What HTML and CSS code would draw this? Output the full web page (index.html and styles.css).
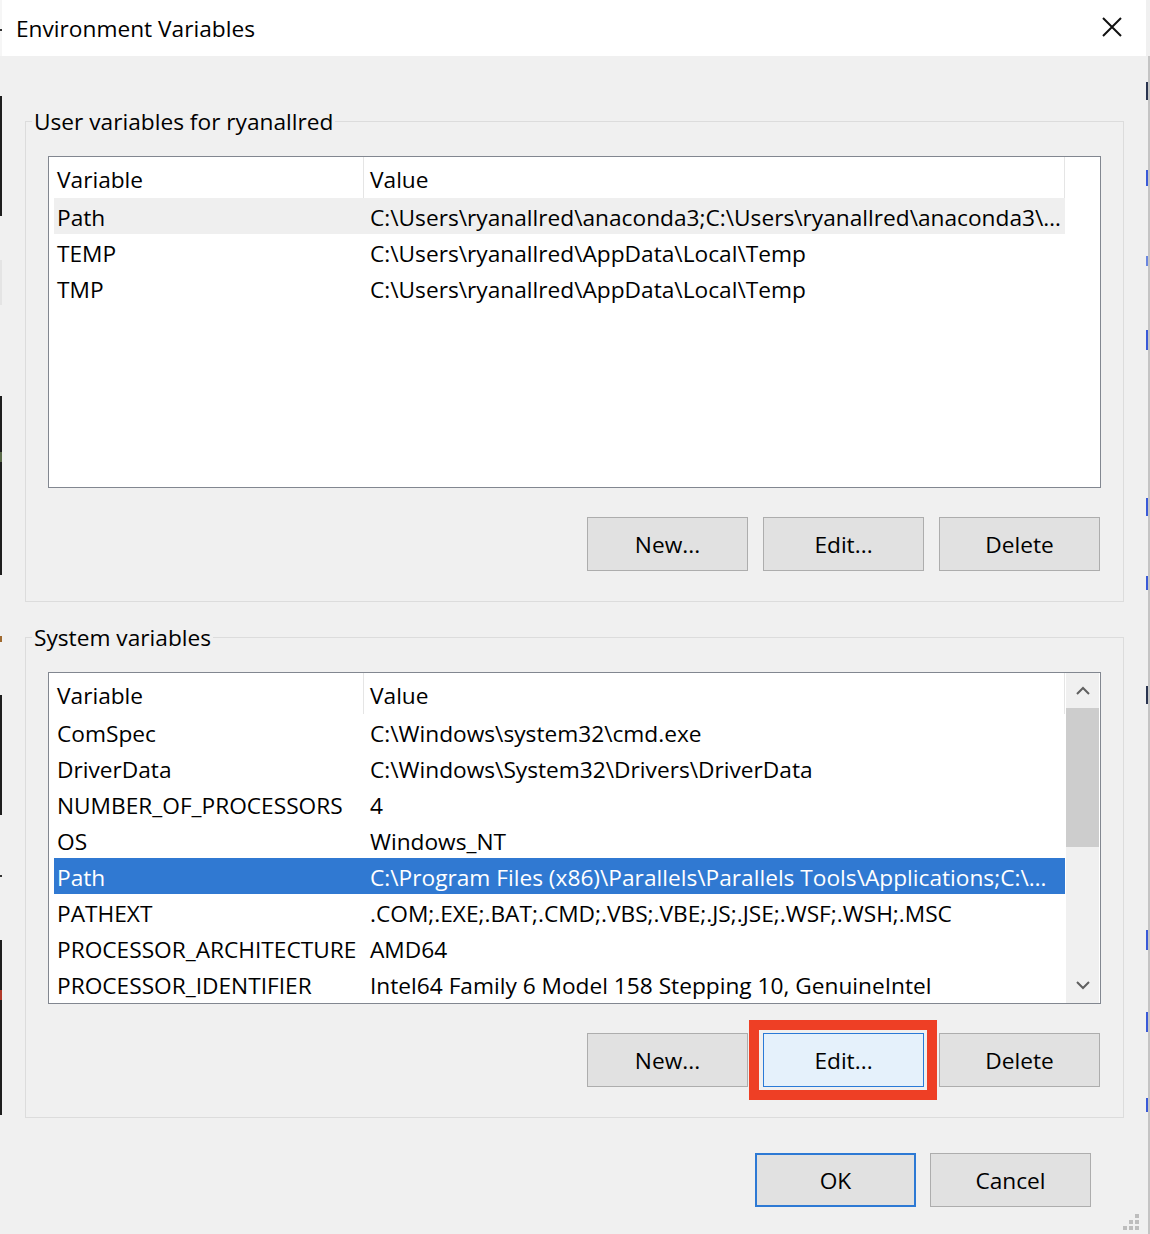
FILE: index.html
```html
<!DOCTYPE html>
<html lang="en">
<head>
<meta charset="utf-8">
<title>Environment Variables</title>
<link rel="stylesheet" href="styles.css">
</head>
<body>
<div class="screen">
  <div class="edge-left"></div>
  <div class="dialog">
    <header class="titlebar">
      <span class="title">Environment Variables</span>
      <button class="close" aria-label="Close">
        <svg width="20" height="20" viewBox="0 0 20 20"><path d="M1 1L19 19M19 1L1 19" stroke="#111" stroke-width="2" fill="none"/></svg>
      </button>
    </header>
    <main class="content">
      <fieldset class="group group-user">
        <legend>User variables for ryanallred</legend>
        <div class="group-body">
          <div class="listview">
            <div class="lv-main">
              <div class="lv-header"><div class="hcell c1">Variable</div><div class="hcell c2">Value</div></div>
              <div class="lv-row hot"><div class="cell c1">Path</div><div class="cell c2">C:\Users\ryanallred\anaconda3;C:\Users\ryanallred\anaconda3\…</div></div>
              <div class="lv-row"><div class="cell c1">TEMP</div><div class="cell c2">C:\Users\ryanallred\AppData\Local\Temp</div></div>
              <div class="lv-row"><div class="cell c1">TMP</div><div class="cell c2">C:\Users\ryanallred\AppData\Local\Temp</div></div>
            </div>
          </div>
          <div class="btn-row">
            <button class="btn">New...</button>
            <button class="btn">Edit...</button>
            <button class="btn">Delete</button>
          </div>
        </div>
      </fieldset>

      <fieldset class="group group-sys">
        <legend>System variables</legend>
        <div class="group-body">
          <div class="listview">
            <div class="lv-main">
              <div class="lv-header"><div class="hcell c1">Variable</div><div class="hcell c2">Value</div></div>
              <div class="lv-row"><div class="cell c1">ComSpec</div><div class="cell c2">C:\Windows\system32\cmd.exe</div></div>
              <div class="lv-row"><div class="cell c1">DriverData</div><div class="cell c2">C:\Windows\System32\Drivers\DriverData</div></div>
              <div class="lv-row"><div class="cell c1">NUMBER_OF_PROCESSORS</div><div class="cell c2">4</div></div>
              <div class="lv-row"><div class="cell c1">OS</div><div class="cell c2">Windows_NT</div></div>
              <div class="lv-row selected"><div class="cell c1">Path</div><div class="cell c2">C:\Program Files (x86)\Parallels\Parallels Tools\Applications;C:\…</div></div>
              <div class="lv-row"><div class="cell c1">PATHEXT</div><div class="cell c2">.COM;.EXE;.BAT;.CMD;.VBS;.VBE;.JS;.JSE;.WSF;.WSH;.MSC</div></div>
              <div class="lv-row"><div class="cell c1">PROCESSOR_ARCHITECTURE</div><div class="cell c2">AMD64</div></div>
              <div class="lv-row"><div class="cell c1">PROCESSOR_IDENTIFIER</div><div class="cell c2">Intel64 Family 6 Model 158 Stepping 10, GenuineIntel</div></div>
            </div>
            <div class="scrollbar">
              <div class="sb-btn"><svg width="14" height="9" viewBox="0 0 14 9"><path d="M1 8L7 2L13 8" stroke="#606060" stroke-width="2" fill="none"/></svg></div>
              <div class="sb-thumb"></div>
              <div class="sb-track"></div>
              <div class="sb-btn"><svg width="14" height="9" viewBox="0 0 14 9"><path d="M1 1L7 7L13 1" stroke="#606060" stroke-width="2" fill="none"/></svg></div>
            </div>
          </div>
          <div class="btn-row">
            <button class="btn">New...</button>
            <span class="annotated">
              <button class="btn btn-focus">Edit...</button>
              <span class="callout"></span>
            </span>
            <button class="btn">Delete</button>
          </div>
        </div>
      </fieldset>

      <div class="dialog-buttons">
        <button class="btn btn-default">OK</button>
        <button class="btn">Cancel</button>
      </div>
    </main>
    <svg class="grip" width="18" height="18" viewBox="0 0 18 18">
      <rect x="12" y="0" width="4" height="4" fill="#bdbdbd"/>
      <rect x="6" y="6" width="4" height="4" fill="#bdbdbd"/>
      <rect x="12" y="6" width="4" height="4" fill="#bdbdbd"/>
      <rect x="0" y="12" width="4" height="4" fill="#bdbdbd"/>
      <rect x="6" y="12" width="4" height="4" fill="#bdbdbd"/>
      <rect x="12" y="12" width="4" height="4" fill="#bdbdbd"/>
    </svg>
  </div>
  <div class="edge-right"><div class="edge-right-marks"></div><div class="edge-right-line"></div></div>
</div>
</body>
</html>
```

FILE: styles.css
```css
* { box-sizing: border-box; }

html, body {
  margin: 0;
  padding: 0;
}

body {
  width: 1150px;
  height: 1234px;
  overflow: hidden;
  background: #f0f0f0;
  font-family: "Open Sans", "Noto Sans", "DejaVu Sans", sans-serif;
  font-size: 22.7px;
  color: #000;
}

.screen {
  display: flex;
  height: 1234px;
}

/* slivers of the desktop behind the dialog */
.edge-left {
  width: 2px;
  flex: none;
  background: linear-gradient(to bottom,
    #f6f6f6 0, #f6f6f6 29px, #333 29px, #333 31px, #f6f6f6 31px, #f6f6f6 56px,
    #f0f0f0 56px, #f0f0f0 96px,
    #1e1e1e 96px, #1e1e1e 216px,
    #f0f0f0 216px, #f0f0f0 260px,
    #e4e4e4 260px, #e4e4e4 305px,
    #f0f0f0 305px, #f0f0f0 396px,
    #1e1e1e 396px, #1e1e1e 452px,
    #5a6a4a 452px, #5a6a4a 462px,
    #1e1e1e 462px, #1e1e1e 575px,
    #f0f0f0 575px, #f0f0f0 636px,
    #a06a30 636px, #a06a30 642px,
    #f0f0f0 642px, #f0f0f0 695px,
    #1e1e1e 695px, #1e1e1e 815px,
    #f0f0f0 815px, #f0f0f0 875px,
    #333 875px, #333 877px,
    #f0f0f0 877px, #f0f0f0 940px,
    #1e1e1e 940px, #1e1e1e 990px,
    #b03a2a 990px, #b03a2a 1000px,
    #1e1e1e 1000px, #1e1e1e 1115px,
    #f0f0f0 1115px);
}

.edge-right {
  width: 4px;
  flex: none;
  display: flex;
  background: #f0f0f0;
}

.edge-right-marks {
  width: 2px;
  background: linear-gradient(to bottom,
    #f0f0f0 0, #f0f0f0 82px,
    #2a3550 82px, #2a3550 100px,
    #f0f0f0 100px, #f0f0f0 170px,
    #3a5ad8 170px, #3a5ad8 186px,
    #f0f0f0 186px, #f0f0f0 256px,
    #6a86e0 256px, #6a86e0 266px,
    #f0f0f0 266px, #f0f0f0 330px,
    #3a5ad8 330px, #3a5ad8 350px,
    #f0f0f0 350px, #f0f0f0 498px,
    #3a5ad8 498px, #3a5ad8 516px,
    #f0f0f0 516px, #f0f0f0 576px,
    #3a5ad8 576px, #3a5ad8 590px,
    #f0f0f0 590px, #f0f0f0 686px,
    #2a3550 686px, #2a3550 704px,
    #f0f0f0 704px, #f0f0f0 930px,
    #3a5ad8 930px, #3a5ad8 950px,
    #f0f0f0 950px, #f0f0f0 1012px,
    #3a5ad8 1012px, #3a5ad8 1032px,
    #f0f0f0 1032px, #f0f0f0 1098px,
    #3a5ad8 1098px, #3a5ad8 1112px,
    #f0f0f0 1112px);
}

.edge-right-line {
  width: 2px;
  margin-top: 56px;
  background: #c4c4c4;
}

/* dialog */
.dialog {
  width: 1144px;
  flex: none;
  position: relative;
  display: flex;
  flex-direction: column;
  background: #f0f0f0;
}

.titlebar {
  height: 56px;
  flex: none;
  background: #fff;
  display: flex;
  align-items: center;
  justify-content: space-between;
  padding-left: 14px;
}

.title {
  line-height: 30px;
  padding-top: 2px;
}

.close {
  width: 68px;
  height: 53px;
  align-self: flex-start;
  border: 0;
  padding: 0;
  background: transparent;
  display: flex;
  align-items: center;
  justify-content: center;
}

.content {
  padding: 0 22px 0 23px;
}

/* group boxes */
.group {
  margin: 50px 0 0 0;
  padding: 0 6px 30px 6px;
  border: 1px solid #dcdcdc;
  min-width: 0;
}

.group-sys {
  margin-top: 20px;
}

.group legend {
  padding: 1px 2px 0 2px;
  line-height: 29px;
  height: 30px;
}

.group-body {
  padding: 20px 16px 0 16px;
}

/* list views */
.listview {
  height: 332px;
  border: 1px solid #828790;
  background: #fff;
  display: flex;
}

.lv-main {
  width: 1017px;
  flex: none;
  overflow: hidden;
}

.lv-header {
  width: 1016px;
  height: 41px;
  display: grid;
  grid-template-columns: 314px 702px;
  line-height: 37px;
}

.hcell {
  white-space: nowrap;
  overflow: hidden;
  padding-top: 4px;
}

.hcell.c1 { padding-left: 8px; }

.hcell.c2 {
  padding-left: 6px;
  border-left: 1px solid #e5e5e5;
  border-right: 1px solid #e5e5e5;
}

.lv-row {
  margin-left: 5px;
  width: 1011px;
  height: 36px;
  display: grid;
  grid-template-columns: 309px 702px;
}

.lv-row.hot { background: #efefef; }

.lv-row.selected {
  background: #3079d2;
  color: #fff;
}

.cell {
  white-space: nowrap;
  overflow: hidden;
  padding-top: 3px;
  line-height: 33px;
}

.cell.c1 { padding-left: 3px; }
.cell.c2 { padding-left: 7px; }

/* scrollbar */
.scrollbar {
  width: 33px;
  flex: none;
  display: flex;
  flex-direction: column;
  background: #f0f0f0;
}

.sb-btn {
  height: 35px;
  flex: none;
  display: flex;
  align-items: center;
  justify-content: center;
}

.sb-thumb {
  height: 139px;
  flex: none;
  background: #cdcdcd;
}

.sb-track { flex: 1; }

/* buttons */
.btn-row {
  margin-top: 29px;
  display: flex;
  justify-content: flex-end;
  gap: 15px;
  padding-right: 1px;
}

.btn {
  width: 161px;
  height: 54px;
  padding: 0;
  border: 1px solid #adadad;
  background: #e1e1e1;
  font-family: inherit;
  font-size: inherit;
  color: #000;
  display: flex;
  align-items: center;
  justify-content: center;
}

.btn-focus {
  background: #e5f1fb;
  border-color: #2a7ad7;
}

.btn-default {
  border: 2px solid #2d79d4;
}

.annotated {
  position: relative;
  display: flex;
}

.callout {
  position: absolute;
  top: -13px;
  bottom: -13px;
  left: -14px;
  right: -13px;
  border: 10px solid #ee3f25;
  pointer-events: none;
}

.dialog-buttons {
  margin-top: 35px;
  margin-right: 33px;
  display: flex;
  justify-content: flex-end;
  gap: 14px;
}

.grip {
  position: absolute;
  right: 5px;
  bottom: 2px;
}
```
